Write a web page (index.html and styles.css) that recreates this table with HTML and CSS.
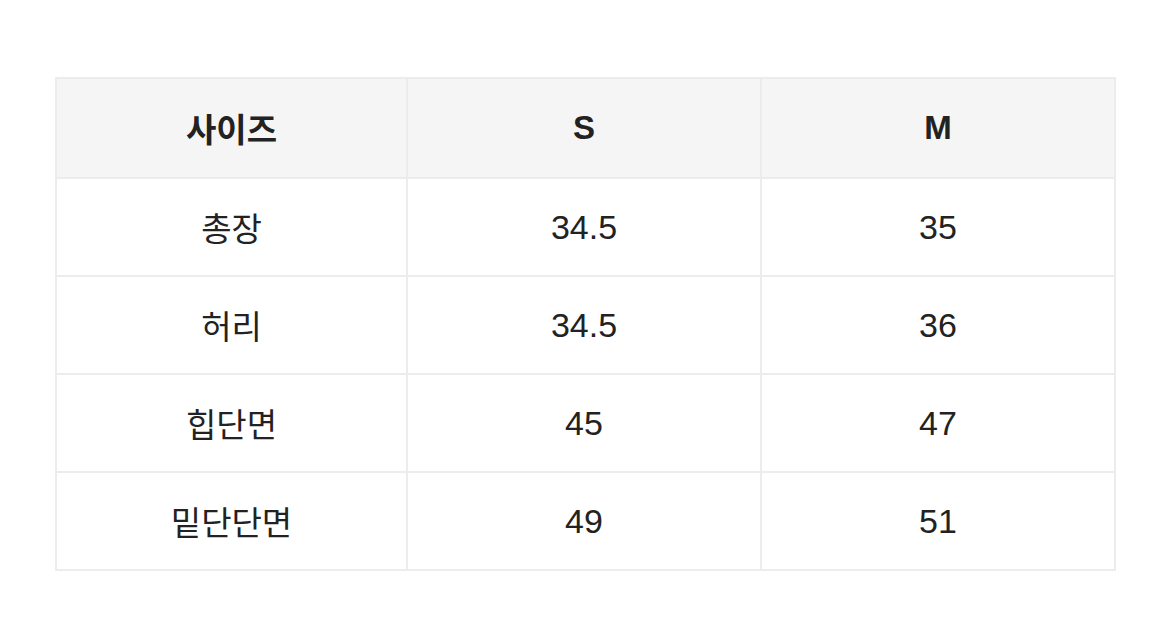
FILE: index.html
```html
<!DOCTYPE html>
<html lang="ko">
<head>
<meta charset="utf-8">
<link rel="stylesheet" href="styles.css">
</head>
<body>
<table class="size-table">
  <colgroup>
    <col class="col-label">
    <col class="col-size">
    <col class="col-size">
  </colgroup>
  <thead>
    <tr><th>사이즈</th><th>S</th><th>M</th></tr>
  </thead>
  <tbody>
    <tr><td>총장</td><td class="num">34.5</td><td class="num">35</td></tr>
    <tr><td>허리</td><td class="num">34.5</td><td class="num">36</td></tr>
    <tr><td>힙단면</td><td class="num">45</td><td class="num">47</td></tr>
    <tr><td>밑단단면</td><td class="num">49</td><td class="num">51</td></tr>
  </tbody>
</table>
</body>
</html>
```
FILE: styles.css
```css
html, body {
  margin: 0;
  background: #ffffff;
}
body {
  padding: 77px 55px 0 55px;
  font-family: "Liberation Sans", "Noto Sans CJK KR", sans-serif;
  color: #222222;
}
.size-table {
  width: 1059px;
  border-collapse: collapse;
  table-layout: fixed;
}
.col-label {
  width: 351px;
}
.col-size {
  width: 354px;
}
.size-table th,
.size-table td {
  border: 2px solid #ececec;
  text-align: center;
  vertical-align: middle;
  font-size: 33px;
  padding: 0;
}
.size-table th {
  background: #f5f5f5;
  font-weight: bold;
  height: 98px;
}
.size-table td {
  font-weight: normal;
  height: 96px;
}
.size-table td.num {
  font-size: 34px;
}
```
